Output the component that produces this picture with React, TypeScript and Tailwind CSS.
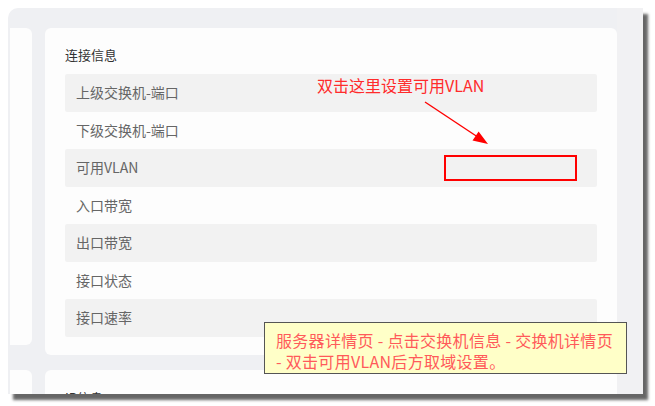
const rows = [
  '上级交换机-端口',
  '下级交换机-端口',
  '可用VLAN',
  '入口带宽',
  '出口带宽',
  '接口状态',
  '接口速率',
];

function InfoRow({ label, striped }: { label: string; striped: boolean }) {
  return (
    <div
      className={`h-[37.5px] flex items-center pl-[11px] text-[14px] text-[#666] ${
        striped ? 'bg-[#f2f2f2] rounded-[2px]' : ''
      }`}
    >
      {label}
    </div>
  );
}

export default function App() {
  return (
    <div className="relative w-[655px] h-[406px] bg-white overflow-hidden pl-[8px] pt-[8px] font-['Noto_Sans_CJK_SC','Noto_Sans',sans-serif]">
      <div className="w-[635px] h-[386px] bg-[#eff0f3] rounded-tl-[10px] shadow-[5px_6px_3px_rgba(0,0,0,0.6)] overflow-hidden flex items-start pt-[20px]">
        {/* sidebar, clipped */}
        <div className="w-[24px] shrink-0 flex flex-col pl-[2px]">
          <div className="h-[317px] shrink-0 bg-[#fdfdfd] rounded-r-[6px]" />
          <div className="h-[60px] shrink-0 mt-[25px] bg-[#fdfdfd] rounded-r-[6px]" />
        </div>

        {/* main column */}
        <div className="ml-[13px] w-[572px] shrink-0 flex flex-col">
          <div className="h-[327px] shrink-0 bg-[#fdfdfd] rounded-[6px] px-[20px] pt-[17px]">
            <div className="h-[20px] leading-[20px] text-[13px] text-[#333] mb-[9px]">连接信息</div>
            {rows.map((r, i) => (
              <InfoRow key={r} label={r} striped={i % 2 === 0} />
            ))}
          </div>
          <div className="h-[80px] shrink-0 mt-[15px] bg-[#fdfdfd] rounded-[6px] px-[20px] pt-[18px]">
            <div className="h-[20px] leading-[20px] text-[13px] text-[#333]">IP信息</div>
          </div>
        </div>

        <div className="flex-1 self-stretch -mt-[20px] bg-[#f1f1f3]" />
      </div>

      {/* annotations */}
      <div className="absolute left-[317px] top-[75px] text-[16px] leading-[20px] text-[#ff2b2b] whitespace-nowrap">
        双击这里设置可用VLAN
      </div>

      <svg className="absolute left-0 top-0" width="655" height="406" viewBox="0 0 655 406">
        <line x1="425" y1="102" x2="477" y2="136.5" stroke="#ff0000" strokeWidth="1.4" />
        <polygon points="488,144 472.5,140.5 475.8,135.8 478.6,131.5" fill="#ff0000" />
      </svg>

      <div className="absolute left-[444px] top-[155px] w-[133px] h-[26px] border-2 border-[#ff0000]" />

      <div className="absolute left-[264px] top-[322px] w-[363px] h-[52px] bg-[#ffffc8] border border-[#555] pl-[11px] pt-[7px] text-[16px] leading-[21px] tracking-[0.3px] text-[#ff5a5a] whitespace-nowrap">
        <div>服务器详情页 - 点击交换机信息 - 交换机详情页</div>
        <div>- 双击可用VLAN后方取域设置。</div>
      </div>
    </div>
  );
}
